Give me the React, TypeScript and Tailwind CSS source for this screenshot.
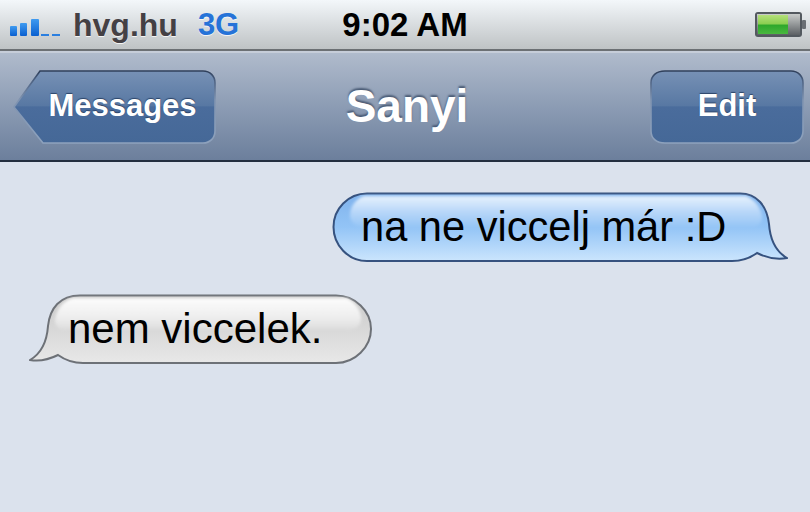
import React from 'react';

const font = "font-['Liberation_Sans',Arial,sans-serif]";

const SignalBars = () => (
  <svg width="50" height="24" viewBox="0 0 50 24">
    <defs>
      <linearGradient id="sig" x1="0" y1="0" x2="0" y2="1">
        <stop offset="0" stopColor="#3f9bf0" />
        <stop offset="1" stopColor="#0a5fd0" />
      </linearGradient>
    </defs>
    <rect x="0" y="13" width="7" height="10" rx="1" fill="url(#sig)" />
    <rect x="10" y="10" width="7" height="13" rx="1" fill="url(#sig)" />
    <rect x="21" y="6" width="8" height="17" rx="1" fill="url(#sig)" />
    <rect x="31" y="21" width="8" height="2" fill="#2a7fe0" />
    <rect x="42" y="21" width="8" height="2" fill="#2a7fe0" />
  </svg>
);

const Battery = () => (
  <svg width="54" height="28" viewBox="0 0 54 28">
    <defs>
      <linearGradient id="batGreen" x1="0" y1="0" x2="0" y2="1">
        <stop offset="0" stopColor="#b5e07a" />
        <stop offset="0.45" stopColor="#8ccf52" />
        <stop offset="0.55" stopColor="#2fa82c" />
        <stop offset="1" stopColor="#49b83f" />
      </linearGradient>
      <linearGradient id="batGray" x1="0" y1="0" x2="0" y2="1">
        <stop offset="0" stopColor="#c9cccb" />
        <stop offset="1" stopColor="#5c6064" />
      </linearGradient>
    </defs>
    <rect x="1" y="1" width="47" height="25" rx="3" fill="#53595f" />
    <rect x="3" y="3" width="43" height="21" fill="url(#batGray)" />
    <rect x="4" y="4" width="30" height="19" fill="url(#batGreen)" />
    <rect x="48" y="9" width="4" height="9" rx="1" fill="#6a6f74" />
  </svg>
);

const NavShape = ({ id, path, width }: { id: string; path: string; width: number }) => (
  <svg className="absolute inset-0" width={width} height="74" viewBox={`0 0 ${width} 74`}>
    <defs>
      <linearGradient id={id} x1="0" y1="0" x2="0" y2="1">
        <stop offset="0" stopColor="#7791b5" />
        <stop offset="0.48" stopColor="#5878a3" />
        <stop offset="0.5" stopColor="#4a6c9c" />
        <stop offset="1" stopColor="#456897" />
      </linearGradient>
      <linearGradient id={`${id}Edge`} x1="0" y1="0" x2="0" y2="1">
        <stop offset="0" stopColor="#2f3f5a" />
        <stop offset="0.12" stopColor="#4a5f80" />
        <stop offset="0.4" stopColor="#7f93b0" />
        <stop offset="1" stopColor="#8ea2bd" />
      </linearGradient>
    </defs>
    <path d={path} fill={`url(#${id})`} stroke={`url(#${id}Edge)`} strokeWidth="1.6" />
  </svg>
);

const BlueBubble = () => (
  <svg className="absolute inset-0" width="456" height="71" viewBox="0 0 456 71">
    <defs>
      <linearGradient id="blueFill" x1="0" y1="0" x2="0" y2="1">
        <stop offset="0" stopColor="#7fb2ec" />
        <stop offset="0.5" stopColor="#93c4f6" />
        <stop offset="1" stopColor="#cbe5fd" />
      </linearGradient>
      <linearGradient id="blueGloss" x1="0" y1="0" x2="0" y2="1">
        <stop offset="0" stopColor="#e6f1fd" />
        <stop offset="0.55" stopColor="#b3d4f8" />
        <stop offset="1" stopColor="#93c4f6" />
      </linearGradient>
      <filter id="blueSoft">
        <feGaussianBlur stdDeviation="1.5" />
      </filter>
    </defs>
    <path
      d="M35 1.5H408C425 1.5 435 14 437 32C438 46 443 59 455 66C444 68 433 65 425 61C418 66 410 69 400 69H35C16 69 1.5 53 1.5 35C1.5 17 16 1.5 35 1.5Z"
      fill="url(#blueFill)"
      stroke="#36527f"
      strokeWidth="2"
    />
    <path d="M32 4H414C424 8 430 18 430 26C430 32 424 36 416 36H36C26 36 18 31 18 24C18 14 24 7 32 4Z" fill="url(#blueGloss)" filter="url(#blueSoft)" />
  </svg>
);

const GrayBubble = () => (
  <svg className="absolute inset-0" width="344" height="71" viewBox="0 0 344 71">
    <defs>
      <linearGradient id="grayFill" x1="0" y1="0" x2="0" y2="1">
        <stop offset="0" stopColor="#c9c9c9" />
        <stop offset="0.5" stopColor="#d8d8d8" />
        <stop offset="1" stopColor="#e8e8e8" />
      </linearGradient>
      <linearGradient id="grayGloss" x1="0" y1="0" x2="0" y2="1">
        <stop offset="0" stopColor="#fcfcfc" />
        <stop offset="0.6" stopColor="#eeeeee" />
        <stop offset="1" stopColor="#dcdcdc" />
      </linearGradient>
      <filter id="graySoft">
        <feGaussianBlur stdDeviation="1.5" />
      </filter>
    </defs>
    <path
      d="M51 1.5H307C326 1.5 342 17 342 35C342 53 326 69 307 69H54C44 69 36 66 29 61C21 65 12 68 1 66C13 59 18 46 19 32C21 14 31 1.5 51 1.5Z"
      fill="url(#grayFill)"
      stroke="#6d7177"
      strokeWidth="2"
    />
    <path d="M44 4H318C326 8 332 16 332 25C332 32 326 36 318 36H36C30 36 26 32 26 26C28 14 34 7 44 4Z" fill="url(#grayGloss)" filter="url(#graySoft)" />
  </svg>
);

export default function App() {
  return (
    <div className={`${font} w-[810px] h-[512px] overflow-hidden flex flex-col bg-[#dbe2ed]`}>
      {/* Status bar */}
      <div className="h-[51px] grid grid-cols-[1fr_auto_1fr] items-center border-b-2 border-[#6c7074] bg-gradient-to-b from-[#f3f7fa] to-[#bfc3c5]">
        <div className="flex items-center pl-[10px] whitespace-nowrap">
          <SignalBars />
          <span className="ml-[13px] text-[32px] font-bold leading-none text-[#444044] [text-shadow:0_1px_0_#f4f4f4]">hvg.hu</span>
          <span className="ml-[20px] text-[31px] font-bold leading-none text-[#2673d8] [text-shadow:0_1px_0_#f4f4f4]">3G</span>
        </div>
        <div className="text-center text-[33px] font-bold leading-none text-black whitespace-nowrap">9:02 AM</div>
        <div className="flex justify-end pr-[2px]">
          <Battery />
        </div>
      </div>

      {/* Nav bar */}
      <div className="h-[111px] grid grid-cols-[1fr_auto_1fr] items-center pl-[13px] pr-[6px] border-t-2 border-b-2 border-t-[#c6cdd9] border-b-[#232e3f] bg-gradient-to-b from-[#b0bbcc] via-[#8c9cb4] to-[#6c7f9c]">
        <div className="flex">
          <button className="relative w-[203px] h-[74px] pl-[16px] text-[31px] font-bold text-white whitespace-nowrap">
            <NavShape id="backFill" width={203} path="M1 37L27 1H190C197 1 202 6 202 13V61C202 68 197 73 190 73H30Z" />
            <span className="relative block text-center [text-shadow:0_-1px_1px_#2c4468]">Messages</span>
          </button>
        </div>
        <span className="mr-[3px] text-[46px] font-bold text-white [text-shadow:0_-2px_2px_#4a5b75]">Sanyi</span>
        <div className="flex justify-end">
          <button className="relative w-[154px] h-[74px] text-[31px] font-bold text-white">
            <NavShape id="editFill" width={154} path="M15 1H141C148 1 153 6 153 13V61C153 68 148 73 141 73H15C6 73 1 68 1 61V13C1 6 6 1 15 1Z" />
            <span className="relative block text-center [text-shadow:0_-1px_1px_#2c4468]">Edit</span>
          </button>
        </div>
      </div>

      {/* Conversation */}
      <div className="flex flex-col">
        <div className="relative self-end w-[456px] h-[71px] mt-[30px] mr-[22px] pl-[29px] text-[41.6px] leading-[69px] text-black whitespace-nowrap">
          <BlueBubble />
          <span className="relative">na ne viccelj már :D</span>
        </div>
        <div className="relative w-[344px] h-[71px] mt-[31px] ml-[29px] pl-[39px] text-[42px] leading-[69px] text-black whitespace-nowrap">
          <GrayBubble />
          <span className="relative">nem viccelek.</span>
        </div>
      </div>
    </div>
  );
}
